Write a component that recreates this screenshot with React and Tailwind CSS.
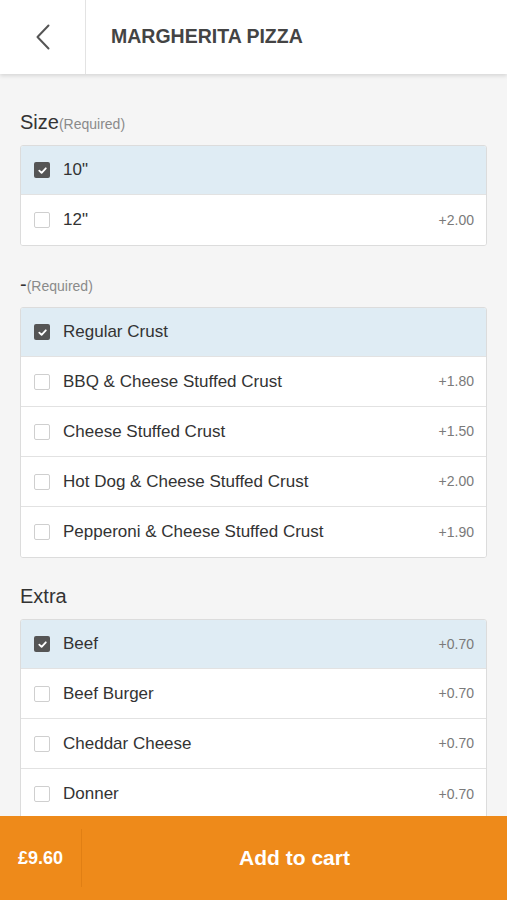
import React, { useState } from 'react';

const sections = [
  {
    title: 'Size',
    required: true,
    options: [
      { name: '10"', price: '' },
      { name: '12"', price: '+2.00' },
    ],
    selected: [0],
  },
  {
    title: '-',
    required: true,
    options: [
      { name: 'Regular Crust', price: '' },
      { name: 'BBQ & Cheese Stuffed Crust', price: '+1.80' },
      { name: 'Cheese Stuffed Crust', price: '+1.50' },
      { name: 'Hot Dog & Cheese Stuffed Crust', price: '+2.00' },
      { name: 'Pepperoni & Cheese Stuffed Crust', price: '+1.90' },
    ],
    selected: [0],
  },
  {
    title: 'Extra',
    required: false,
    options: [
      { name: 'Beef', price: '+0.70' },
      { name: 'Beef Burger', price: '+0.70' },
      { name: 'Cheddar Cheese', price: '+0.70' },
      { name: 'Donner', price: '+0.70' },
    ],
    selected: [0],
  },
];

function Checkbox({ checked }) {
  return checked ? (
    <span className="w-4 h-4 rounded-[2px] bg-[#555] flex items-center justify-center shrink-0">
      <svg width="11" height="11" viewBox="0 0 12 12">
        <path d="M2.5 6.2 L5 8.6 L9.6 3.6" fill="none" stroke="white" strokeWidth="2" strokeLinecap="round" strokeLinejoin="round" />
      </svg>
    </span>
  ) : (
    <span className="w-4 h-4 rounded-[2px] border border-[#cfcfcf] bg-white shrink-0" />
  );
}

function Section({ section }) {
  const [selected, setSelected] = useState(section.selected);
  const toggle = (i) =>
    setSelected((s) => (s.includes(i) ? s.filter((x) => x !== i) : [...s, i]));

  return (
    <div>
      <div className="h-[28px] flex items-end mb-[10px]">
        <span className="text-[20px] leading-[26px] text-[#333]">{section.title}</span>
        {section.required && (
          <span className="text-[14px] leading-[22px] text-[#8a8a8a]">(Required)</span>
        )}
      </div>
      <div className="bg-white border border-[#dcdcdc] rounded-[3px] divide-y divide-[#e2e2e2] overflow-hidden">
        {section.options.map((o, i) => {
          const on = selected.includes(i);
          return (
            <div
              key={o.name}
              onClick={() => toggle(i)}
              className={`h-[50px] first:h-[49px] flex items-center pl-[13px] pr-[12px] ${on ? 'bg-[#dfecf4]' : 'bg-white'}`}
            >
              <Checkbox checked={on} />
              <span className="ml-[13px] text-[17px] text-[#333] flex-1">{o.name}</span>
              <span className="text-[14px] text-[#7a7a7a]">{o.price}</span>
            </div>
          );
        })}
      </div>
    </div>
  );
}

export default function App() {
  return (
    <div
      className="h-[900px] flex flex-col bg-[#f5f5f5] overflow-hidden"
      style={{ fontFamily: '"Liberation Sans", Arial, sans-serif' }}
    >
      {/* header */}
      <header className="h-[74px] bg-white flex shrink-0 shadow-[0_2px_4px_rgba(0,0,0,0.12)] relative z-10">
        <div className="w-[86px] border-r border-[#e3e3e3] flex items-center justify-center">
          <svg width="18" height="28" viewBox="0 0 18 28">
            <path d="M14.5 2.5 L3.5 14 L14.5 25.5" fill="none" stroke="#555" strokeWidth="2" strokeLinecap="round" strokeLinejoin="round" />
          </svg>
        </div>
        <div className="flex items-center pl-[25px]">
          <h1 className="text-[19.5px] font-bold text-[#444]">MARGHERITA PIZZA</h1>
        </div>
      </header>

      {/* options */}
      <main className="flex-1 overflow-hidden px-[20px] pt-[33px] flex flex-col gap-[23px]">
        {sections.map((s) => (
          <Section key={s.title} section={s} />
        ))}
      </main>

      {/* bottom bar */}
      <footer className="h-[84px] bg-[#ee8a1a] flex items-center shrink-0">
        <div className="w-[82px] h-[58px] border-r border-[#e07f14] flex items-center pl-[18px]">
          <span className="text-[18px] font-bold text-white">£9.60</span>
        </div>
        <button className="flex-1 h-full text-[21px] font-bold text-white">Add to cart</button>
      </footer>
    </div>
  );
}
